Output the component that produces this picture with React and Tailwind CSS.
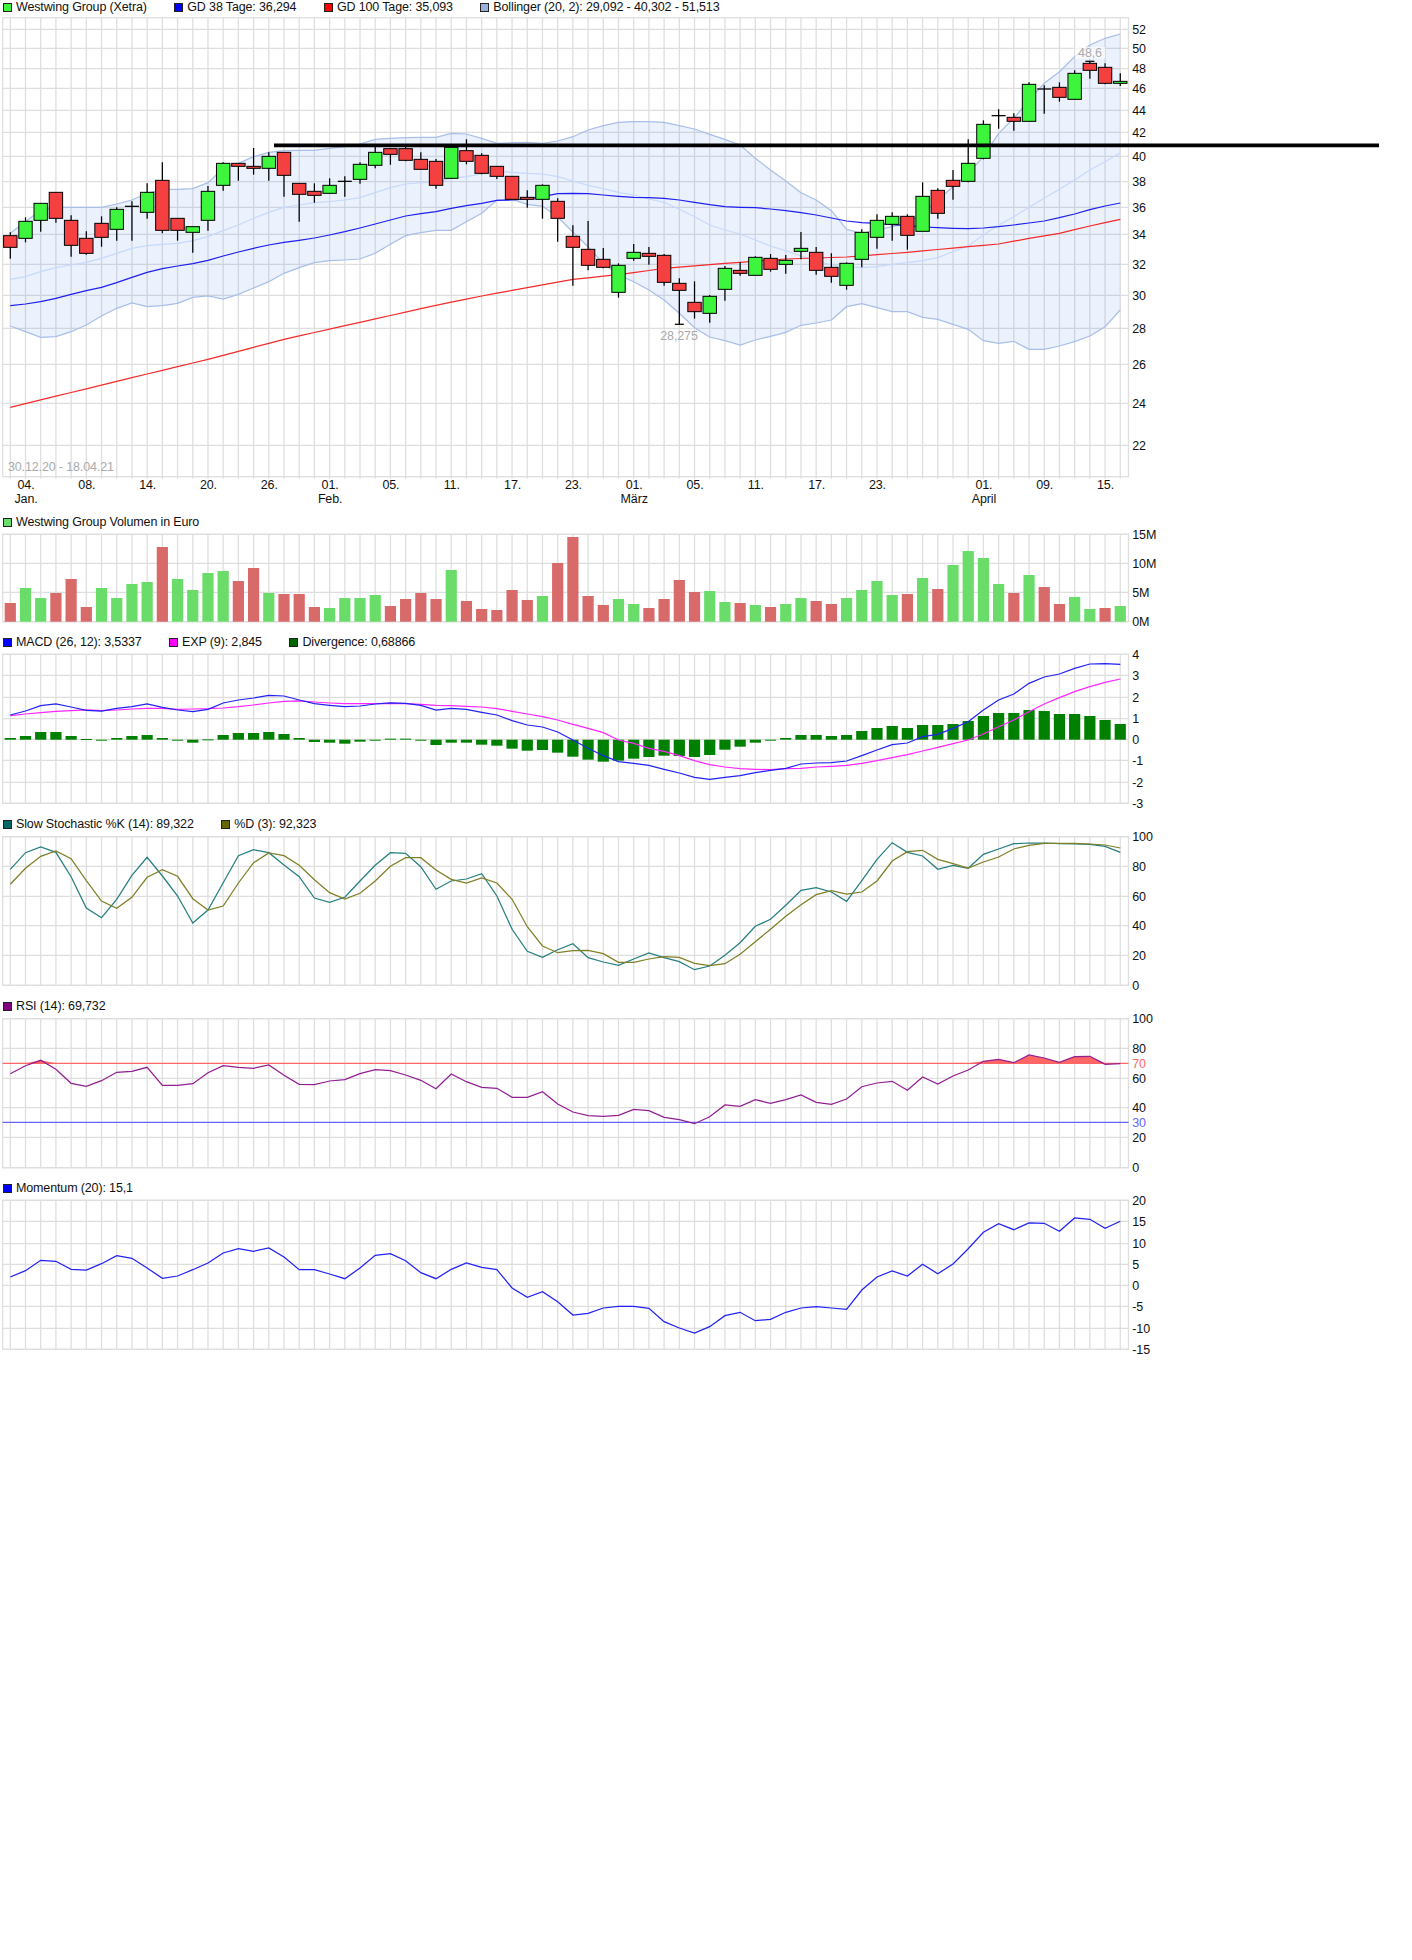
const X = (i) => 10.3 + 15.205 * i;
const range74 = Array.from({ length: 74 }, (_, i) => i);

// candles: high, low, body top, body bottom, g/r (values read in 3x px)
const candles = [
  [697, 776, 707, 742, "r"], [652, 727, 664, 715, "g"], [610, 695, 610, 661, "g"], [577, 668, 577, 655, "r"],
  [646, 770, 661, 736, "r"], [694, 764, 715, 760, "r"], [649, 740, 670, 712, "r"], [622, 722, 628, 688, "g"],
  [604, 722, 619, 619, "d"], [550, 656, 577, 637, "g"], [487, 700, 541, 691, "r"], [655, 722, 655, 691, "r"],
  [680, 758, 680, 697, "g"], [558, 692, 574, 661, "g"], [487, 572, 490, 556, "g"], [490, 542, 490, 499, "r"],
  [444, 524, 499, 505, "r"], [457, 542, 469, 505, "g"], [457, 590, 457, 526, "r"], [550, 665, 550, 583, "r"],
  [550, 608, 574, 586, "r"], [535, 580, 556, 580, "g"], [529, 590, 544, 544, "d"], [487, 551, 493, 538, "g"],
  [440, 505, 457, 496, "g"], [445, 494, 446, 463, "r"], [440, 484, 446, 481, "r"], [457, 508, 478, 508, "r"],
  [477, 566, 484, 556, "r"], [440, 535, 442, 535, "g"], [418, 493, 452, 484, "r"], [460, 523, 466, 520, "r"],
  [499, 537, 499, 529, "r"], [529, 598, 529, 598, "r"], [571, 623, 592, 598, "r"], [553, 656, 556, 598, "g"],
  [595, 725, 604, 655, "r"], [676, 857, 709, 742, "r"], [663, 811, 748, 796, "r"], [744, 805, 778, 802, "r"],
  [790, 893, 796, 877, "g"], [732, 782, 757, 775, "g"], [741, 794, 760, 769, "r"], [762, 857, 766, 847, "r"],
  [835, 973, 850, 871, "r"], [844, 956, 907, 935, "r"], [885, 968, 889, 940, "g"], [798, 902, 805, 868, "g"],
  [787, 827, 811, 820, "r"], [769, 826, 772, 826, "g"], [762, 815, 775, 808, "r"], [765, 821, 781, 793, "g"],
  [696, 778, 745, 754, "g"], [741, 824, 757, 811, "r"], [760, 848, 802, 829, "r"], [787, 869, 790, 856, "g"],
  [688, 802, 697, 778, "g"], [643, 746, 661, 712, "g"], [637, 722, 649, 673, "g"], [643, 749, 649, 706, "r"],
  [547, 694, 589, 694, "g"], [565, 656, 571, 640, "r"], [510, 599, 541, 559, "r"], [418, 547, 490, 544, "g"],
  [361, 478, 373, 475, "g"], [328, 386, 347, 347, "d"], [340, 392, 352, 364, "r"], [247, 364, 253, 364, "g"],
  [256, 341, 267, 267, "d"], [247, 305, 262, 292, "r"], [211, 298, 220, 298, "g"], [184, 236, 190, 211, "r"],
  [190, 253, 202, 250, "r"], [220, 258, 244, 250, "g"],
];

const bollUp = [700, 665, 630, 622, 622, 622, 622, 612, 600, 580, 568, 568, 566, 548, 505, 490, 470, 457, 452, 451, 451, 445, 440, 432, 418, 415, 413, 412, 412, 400, 402, 415, 430, 428, 427, 430, 423, 410, 390, 377, 367, 365, 365, 367, 377, 387, 403, 418, 435, 475, 510, 543, 578, 600, 632, 688, 700, 690, 680, 670, 640, 600, 560, 520, 470, 400, 355, 300, 250, 215, 170, 135, 115, 102];
const bollMid = [838, 830, 815, 803, 795, 787, 775, 760, 745, 737, 733, 730, 722, 710, 692, 675, 655, 637, 622, 615, 608, 605, 600, 593, 578, 563, 552, 548, 545, 535, 530, 522, 514, 517, 520, 522, 530, 543, 556, 566, 577, 585, 597, 607, 628, 650, 675, 690, 702, 720, 738, 752, 768, 782, 795, 800, 803, 800, 793, 788, 782, 773, 755, 738, 705, 675, 650, 622, 595, 568, 540, 510, 485, 458];
const bollLow = [978, 995, 1012, 1010, 995, 975, 948, 925, 909, 920, 917, 910, 892, 888, 897, 883, 864, 845, 820, 803, 788, 782, 780, 777, 760, 733, 707, 698, 691, 691, 665, 640, 600, 598, 613, 619, 650, 697, 740, 790, 825, 845, 870, 900, 940, 983, 1011, 1022, 1035, 1020, 1009, 997, 976, 969, 960, 920, 911, 923, 935, 935, 952, 958, 973, 988, 1022, 1030, 1024, 1048, 1048, 1038, 1025, 1008, 980, 930];
const gd38 = [917, 912, 905, 895, 883, 872, 862, 848, 832, 817, 806, 798, 791, 781, 768, 756, 745, 735, 727, 721, 714, 705, 695, 684, 672, 660, 648, 641, 635, 625, 617, 610, 601, 600, 597, 590, 581, 580, 581, 585, 589, 592, 593, 595, 600, 607, 614, 620, 622, 623, 627, 632, 638, 645, 654, 663, 668, 670, 674, 677, 681, 683, 685, 686, 684, 680, 675, 669, 663, 653, 642, 629, 618, 609];
const gd100Anchors = [[0, 1222], [8, 1133], [13, 1078], [18, 1018], [23, 967], [28, 916], [31, 888], [37, 838], [40, 824], [41, 818], [43, 805], [47, 790], [51, 777], [55, 771], [59, 757], [63, 740], [65, 732], [67, 715], [69, 700], [71, 678], [73, 658]];

const volumes = [[279, "r"], [234, "g"], [264, "g"], [249, "r"], [207, "r"], [291, "r"], [234, "g"], [264, "g"], [222, "g"], [216, "g"], [111, "r"], [207, "g"], [240, "g"], [189, "g"], [183, "g"], [213, "r"], [174, "r"], [249, "g"], [252, "r"], [252, "r"], [291, "r"], [294, "g"], [264, "g"], [264, "g"], [255, "g"], [288, "r"], [267, "r"], [249, "r"], [267, "r"], [180, "g"], [273, "r"], [297, "r"], [300, "r"], [240, "r"], [270, "r"], [258, "g"], [159, "r"], [81, "r"], [258, "r"], [285, "r"], [267, "g"], [282, "g"], [294, "r"], [267, "r"], [210, "r"], [246, "r"], [243, "g"], [276, "g"], [279, "r"], [285, "g"], [291, "r"], [282, "g"], [264, "g"], [273, "r"], [282, "r"], [264, "g"], [240, "g"], [213, "g"], [255, "g"], [252, "r"], [204, "g"], [237, "r"], [165, "g"], [123, "g"], [144, "g"], [222, "g"], [249, "r"], [195, "g"], [231, "r"], [282, "r"], [261, "g"], [297, "g"], [294, "r"], [288, "g"]];

const macd = [615, 603, 587, 582, 591, 601, 603, 595, 590, 582, 592, 600, 605, 598, 579, 570, 564, 556, 558, 570, 581, 586, 590, 588, 582, 579, 580, 586, 600, 595, 598, 607, 615, 632, 645, 651, 666, 690, 715, 737, 755, 760, 766, 778, 789, 802, 808, 802, 797, 788, 781, 775, 762, 759, 758, 753, 737, 720, 704, 699, 680, 673, 655, 635, 600, 570, 552, 520, 501, 492, 475, 462, 461, 463];
const exp9 = [617, 612, 608, 604, 602, 600, 602, 600, 597, 595, 595, 598, 597, 596, 594, 590, 585, 579, 574, 573, 576, 579, 581, 581, 581, 580, 581, 583, 586, 587, 589, 591, 596, 604, 612, 620, 630, 643, 655, 668, 690, 700, 715, 724, 737, 752, 764, 771, 776, 778, 779, 776, 775, 771, 769, 766, 760, 752, 743, 734, 723, 712, 701, 690, 672, 650, 630, 605, 582, 563, 545, 530, 517, 507];
const divergence = [684, 678, 666, 666, 678, 687, 692, 684, 678, 675, 684, 692, 698, 688, 675, 669, 669, 666, 672, 684, 696, 698, 701, 695, 692, 686, 686, 692, 705, 698, 698, 704, 707, 716, 722, 720, 728, 740, 749, 755, 752, 746, 741, 737, 738, 741, 735, 719, 710, 698, 692, 684, 675, 675, 678, 675, 663, 654, 648, 654, 645, 645, 642, 633, 618, 609, 609, 600, 603, 612, 612, 618, 630, 642];

const stochK = [178, 128, 111, 127, 200, 294, 323, 268, 196, 142, 198, 258, 339, 300, 218, 137, 119, 128, 165, 200, 264, 277, 262, 213, 166, 128, 130, 170, 238, 213, 207, 191, 258, 358, 424, 442, 419, 401, 443, 456, 466, 447, 429, 443, 455, 479, 468, 436, 398, 349, 328, 286, 241, 233, 246, 274, 212, 148, 98, 127, 138, 178, 166, 175, 133, 117, 101, 99, 99, 101, 102, 103, 109, 127];
const stochD = [223, 175, 139, 123, 146, 212, 273, 295, 262, 202, 179, 199, 266, 300, 288, 219, 158, 129, 137, 166, 209, 248, 267, 250, 213, 169, 143, 143, 180, 208, 219, 204, 219, 268, 350, 408, 428, 422, 421, 431, 457, 457, 447, 440, 442, 460, 467, 461, 433, 395, 358, 319, 284, 254, 242, 252, 246, 213, 153, 125, 121, 148, 161, 174, 156, 141, 117, 106, 100, 100, 100, 102, 105, 114];
const rsi = [791, 767, 751, 778, 820, 829, 812, 787, 784, 772, 826, 826, 821, 788, 767, 772, 775, 765, 796, 823, 824, 813, 809, 791, 779, 782, 795, 811, 836, 792, 815, 832, 835, 862, 862, 845, 882, 906, 917, 919, 916, 898, 902, 922, 929, 941, 920, 885, 889, 869, 880, 869, 855, 877, 883, 867, 830, 819, 814, 841, 801, 822, 798, 780, 754, 748, 758, 735, 744, 757, 740, 739, 763, 761];
const momentum = [321, 302, 271, 274, 298, 300, 281, 257, 265, 294, 325, 318, 299, 279, 249, 236, 244, 234, 261, 299, 299, 312, 326, 294, 256, 251, 272, 308, 326, 298, 279, 292, 299, 354, 382, 365, 395, 435, 430, 414, 409, 409, 415, 455, 474, 489, 470, 437, 427, 452, 448, 427, 414, 410, 414, 418, 360, 321, 303, 318, 283, 311, 282, 236, 187, 161, 179, 159, 160, 184, 144, 148, 175, 154];

const dateLabels = [[1, "04."], [5, "08."], [9, "14."], [13, "20."], [17, "26."], [21, "01."], [25, "05."], [29, "11."], [33, "17."], [37, "23."], [41, "01."], [45, "05."], [49, "11."], [53, "17."], [57, "23."], [64, "01."], [68, "09."], [72, "15."]];
const monthLabels = [[1, "Jan."], [21, "Feb."], [41, "März"], [64, "April"]];

const priceLines = [[29.3, "52"], [48.3, "50"], [68.7, "48"], [88.3, "46"], [110.3, "44"], [132.3, "42"], [156.3, "40"], [181.7, "38"], [207.3, "36"], [234.3, "34"], [264.3, "32"], [295.3, "30"], [328.3, "28"], [364.3, "26"], [403.3, "24"], [445.3, "22"]];
const volumeLines = [[534.3, "15M"], [563.3, "10M"], [592.3, "5M"], [621.7, "0M"]];
const macdLines = [[654.3, "4"], [675.3, "3"], [697.3, "2"], [718.7, "1"], [739.3, "0"], [760.3, "-1"], [782.3, "-2"], [803.3, "-3"]];
const stochLines = [[836.7, "100"], [866.3, "80"], [896.3, "60"], [925.7, "40"], [955.3, "20"], [985.3, "0"]];
const rsiLines = [[1018.7, "100"], [1048.3, "80"], [1078.3, "60"], [1107.7, "40"], [1137.3, "20"], [1167.7, "0"]];
const momentumLines = [[1200.3, "20"], [1221.3, "15"], [1243.7, "10"], [1264.3, "5"], [1285.3, "0"], [1306.3, "-5"], [1328.3, "-10"], [1349.3, "-15"]];

const gd100 = range74.map((i) => {
  const next = gd100Anchors.findIndex(([a]) => a >= i);
  if (gd100Anchors[next][0] === i) return gd100Anchors[next][1];
  const [a0, v0] = gd100Anchors[next - 1];
  const [a1, v1] = gd100Anchors[next];
  return v0 + ((v1 - v0) * (i - a0)) / (a1 - a0);
});

const pts = (values, toY) => values.map((v, i) => `${X(i).toFixed(1)},${toY(v).toFixed(1)}`).join(" ");
const y3 = (v) => v / 3;
const vol = (v) => 510 + v / 3;
const sub = (v) => 810 + v / 3;
const mom = (v) => 1170 + v / 3;

const Legend = ({ items }) => (
  <div className="flex h-[14px] items-center gap-[27.5px] pl-[3px] text-[12.5px] leading-[14px] text-[#111]">
    {items.map(([color, label]) => (
      <div key={label} className="flex items-center gap-[4px] whitespace-nowrap">
        <span className={`h-[9px] w-[9px] border border-[#222] ${color}`} />
        <span>{label}</span>
      </div>
    ))}
  </div>
);

const Plot = ({ top, height, lines, ticks = 0, children }) => {
  const first = lines[0][0];
  const last = ticks ? 476.7 : lines[lines.length - 1][0];
  return (
    <svg width="1412" height={height} viewBox={`0 ${top} 1412 ${height}`} className="block overflow-visible">
      <g stroke="#dedede" strokeWidth="1.25" fill="none">
        <rect x="2.7" y={ticks ? 17.7 : first} width="1125.8" height={last - (ticks ? 17.7 : first)} />
        {lines.map(([y]) => (
          <line key={y} x1="2.7" x2="1128.5" y1={y} y2={y} />
        ))}
        {range74.map((i) => (
          <line key={i} x1={X(i)} x2={X(i)} y1={ticks ? 17.7 : first} y2={last + ticks} />
        ))}
      </g>
      {children}
      {lines.map(([y, label]) => (
        <text key={y} x="1132.3" y={y + 4.5} fill="#111" fontSize="12.5">
          {label}
        </text>
      ))}
    </svg>
  );
};

const Curve = ({ values, toY, color, width = 1.25 }) => (
  <polyline points={pts(values, toY)} fill="none" stroke={color} strokeWidth={width} />
);

const Candle = ({ c, i }) => {
  const [high, low, top, bottom, kind] = c;
  const x = X(i);
  return (
    <g stroke="#000" strokeWidth="1.25">
      <line x1={x} x2={x} y1={high / 3} y2={low / 3} />
      {kind === "d" ? (
        <line x1={x - 7} x2={x + 7} y1={top / 3} y2={top / 3} />
      ) : (
        <rect x={x - 6.7} y={top / 3} width="13.4" height={(bottom - top) / 3} fill={kind === "g" ? "#3df53d" : "#f44040"} strokeWidth="1" />
      )}
    </g>
  );
};

export default function App() {
  const bandPoly = `${pts(bollUp, y3)} ${pts(bollLow, y3).split(" ").reverse().join(" ")}`;
  const rsiFill = `${X(0)},1063.3 ${pts(rsi, (v) => Math.min(sub(v), 1063.3))} ${X(73)},1063.3`;

  return (
    <div className="min-h-[1960px] w-[1412px] bg-white font-['Liberation_Sans',Arial,sans-serif] tracking-[-0.14px]">
      <Legend
        items={[
          ["bg-[#3df53d]", "Westwing Group (Xetra)"],
          ["bg-[#0000ff]", "GD 38 Tage: 36,294"],
          ["bg-[#ff0000]", "GD 100 Tage: 35,093"],
          ["bg-[#9ab0dd]", "Bollinger (20, 2): 29,092 - 40,302 - 51,513"],
        ]}
      />
      <Plot top={14} height={501} lines={priceLines} ticks={2}>
        <polygon points={bandPoly} fill="#2266ee" fillOpacity="0.09" />
        <Curve values={bollUp} toY={y3} color="#a9bfe8" />
        <Curve values={bollLow} toY={y3} color="#a9bfe8" />
        <Curve values={bollMid} toY={y3} color="#c6d9fb" />
        <Curve values={gd38} toY={y3} color="#1f1ff0" />
        <Curve values={gd100} toY={y3} color="#f52a2a" />
        <text x="8" y="471" fill="#aaa" fontSize="12.5">30.12.20 - 18.04.21</text>
        {candles.map((c, i) => (
          <Candle key={i} c={c} i={i} />
        ))}
        <g stroke="#000" strokeWidth="1.25">
          <line x1={X(44) - 4.5} x2={X(44) + 4.5} y1="324.3" y2="324.3" />
          <line x1={X(71) - 4.5} x2={X(71) + 4.5} y1="61.3" y2="61.3" />
        </g>
        <line x1="274" x2="1379" y1="145.3" y2="145.3" stroke="#000" strokeWidth="3.75" />
        <rect x="1075" y="47" width="30" height="11.5" fill="#fff" fillOpacity="0.7" />
        <text x="1090" y="57" fill="#aaa" fontSize="12.5" textAnchor="middle">48,6</text>
        <text x="679" y="340" fill="#aaa" fontSize="12.5" textAnchor="middle">28,275</text>
        <g fill="#111" fontSize="12.5" textAnchor="middle">
          {dateLabels.map(([i, label]) => (
            <text key={i} x={X(i) + 0.5} y="489">{label}</text>
          ))}
          {monthLabels.map(([i, label]) => (
            <text key={i} x={X(i) + 0.5} y="503">{label}</text>
          ))}
        </g>
      </Plot>

      <Legend items={[["bg-[#6adc6a]", "Westwing Group Volumen in Euro"]]} />
      <Plot top={529} height={106} lines={volumeLines}>
        {volumes.map(([v, kind], i) => (
          <rect key={i} x={X(i) - 5.6} y={vol(v)} width="11.2" height={621.7 - vol(v)} fill={kind === "g" ? "#6adc6a" : "#d96a6a"} />
        ))}
      </Plot>

      <Legend
        items={[
          ["bg-[#0000ff]", "MACD (26, 12): 3,5337"],
          ["bg-[#ff00ff]", "EXP (9): 2,845"],
          ["bg-[#006600]", "Divergence: 0,68866"],
        ]}
      />
      <Plot top={649} height={168} lines={macdLines}>
        {divergence.map((v, i) => {
          const y = vol(v);
          const zero = 739.7;
          return <rect key={i} x={X(i) - 5.6} y={Math.min(y, zero)} width="11.2" height={Math.max(Math.abs(y - zero), 1)} fill="#008000" />;
        })}
        <Curve values={exp9} toY={vol} color="#ff26ff" />
        <Curve values={macd} toY={vol} color="#2222f5" />
      </Plot>

      <Legend
        items={[
          ["bg-[#006666]", "Slow Stochastic %K (14): 89,322"],
          ["bg-[#666600]", "%D (3): 92,323"],
        ]}
      />
      <Plot top={831} height={168} lines={stochLines}>
        <Curve values={stochK} toY={sub} color="#267f7f" />
        <Curve values={stochD} toY={sub} color="#7f7f26" />
      </Plot>

      <Legend items={[["bg-[#800080]", "RSI (14): 69,732"]]} />
      <Plot top={1013} height={168} lines={rsiLines}>
        <polygon points={rsiFill} fill="#ff6666" />
        <line x1="2.7" x2="1128.5" y1="1063.3" y2="1063.3" stroke="#f66" strokeWidth="1.25" />
        <line x1="2.7" x2="1128.5" y1="1122.3" y2="1122.3" stroke="#66f" strokeWidth="1.25" />
        <Curve values={rsi} toY={sub} color="#921f92" />
        <text x="1132.3" y="1067.8" fill="#f66" fontSize="12.5">70</text>
        <text x="1132.3" y="1126.8" fill="#66f" fontSize="12.5">30</text>
      </Plot>

      <Legend items={[["bg-[#0000ff]", "Momentum (20): 15,1"]]} />
      <Plot top={1195} height={165} lines={momentumLines}>
        <Curve values={momentum} toY={mom} color="#2222f5" />
      </Plot>
    </div>
  );
}
